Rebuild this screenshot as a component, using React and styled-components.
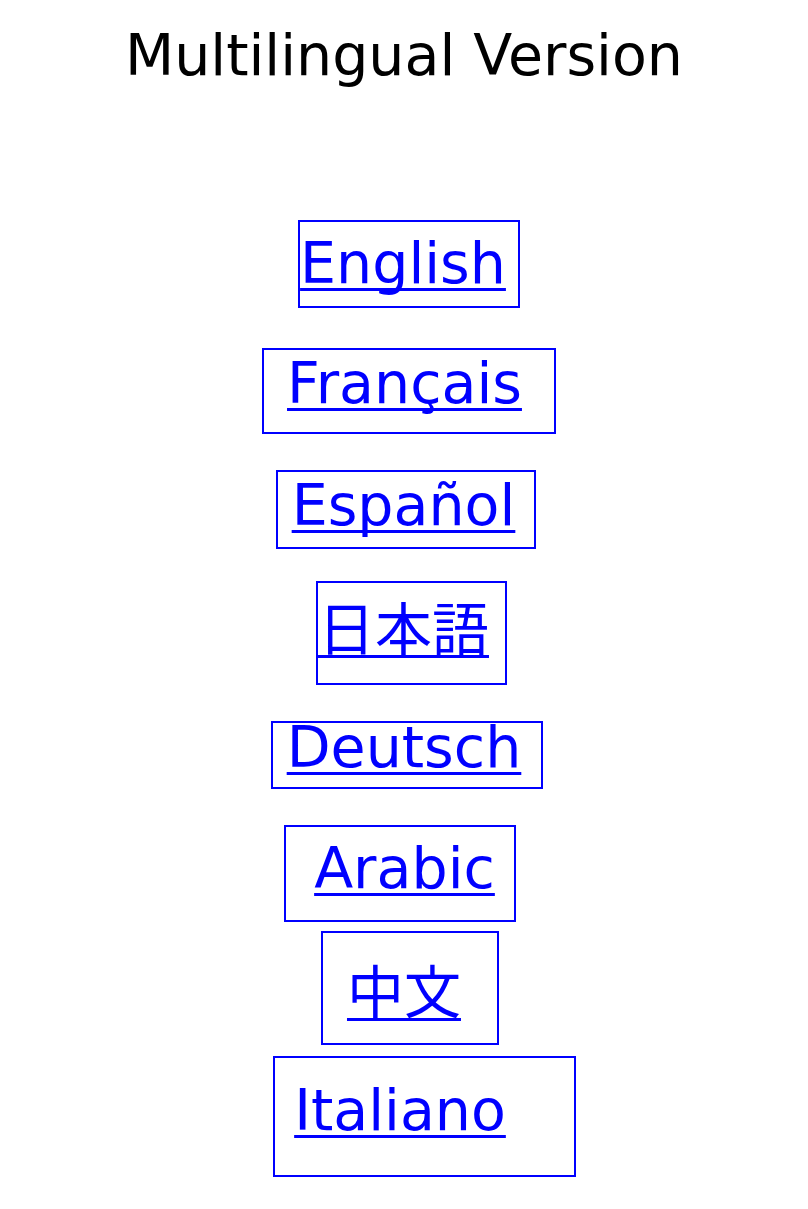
import React from "react";
import styled, { createGlobalStyle } from "styled-components";

const languages = [
  { label: "English", gap: 132, shift: 5, pad: [8, 12, 10, 0] },
  { label: "Français", gap: 40, shift: 5, pad: [0, 32, 16, 23] },
  { label: "Español", gap: 36, shift: 2, pad: [0, 19, 9, 14] },
  { label: "日本語", gap: 32, shift: 7.5, pad: [1, 16, 17, 0] },
  { label: "Deutsch", gap: 36, shift: 3, pad: [2, 20, 16, 14], tight: true },
  { label: "Arabic", gap: 36, shift: -4, pad: [8, 19, 19, 28] },
  { label: "中文", gap: 9, shift: 6, pad: [14, 36, 14, 24] },
  { label: "Italiano", gap: 11, shift: 20.5, pad: [19, 68, 32, 19] },
];

const App = () => {
  return (
    <Page>
      <GlobalStyle />
      <Title>Multilingual Version</Title>
      <LangList>
        {languages.map((lang) => (
          <LangLink
            key={lang.label}
            href="#"
            $gap={lang.gap}
            $shift={lang.shift}
            $pad={lang.pad}
            $tight={lang.tight}
          >
            {lang.label}
          </LangLink>
        ))}
      </LangList>
    </Page>
  );
};

export default App;

const GlobalStyle = createGlobalStyle`
  body {
    margin: 0;
    background: #ffffff;
    font-family: "DejaVu Sans", "Noto Sans CJK JP", sans-serif;
  }
`;

const Page = styled.div`
  display: flex;
  flex-direction: column;
  align-items: center;
  padding-top: 22px;
  padding-bottom: 30px;
`;

const Title = styled.h1`
  margin: 0;
  font-size: 57px;
  font-weight: normal;
  line-height: normal;
  color: #000;
`;

const LangList = styled.div`
  display: flex;
  flex-direction: column;
  align-items: center;
`;

const LangLink = styled.a`
  display: block;
  margin-top: ${(p) => p.$gap}px;
  margin-left: ${(p) => p.$shift * 2}px;
  padding: ${(p) => p.$pad.map((v) => v + "px").join(" ")};
  border: 2px solid #0000ff;
  color: #0000ff;
  font-family: "DejaVu Sans", "Noto Sans CJK JP", "Noto Sans CJK SC", sans-serif;
  font-size: 57px;
  line-height: ${(p) => (p.$tight ? 0.8 : "normal")};
  white-space: nowrap;
  text-decoration: underline;
  text-decoration-thickness: 3px;
  text-underline-offset: 5px;
  text-decoration-skip-ink: none;
`;
